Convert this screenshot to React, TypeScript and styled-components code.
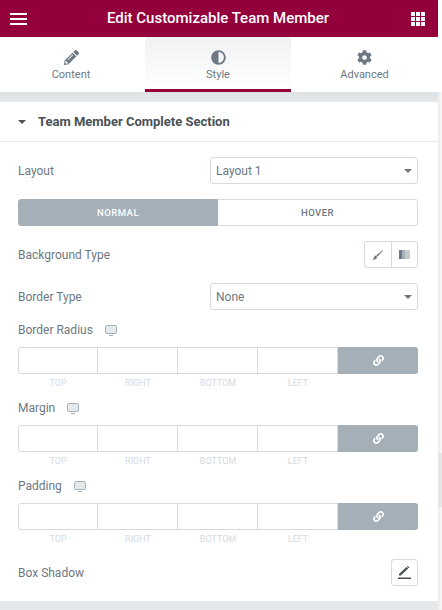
import React from 'react'
import styled, { createGlobalStyle } from 'styled-components'
import { FaPencilAlt, FaAdjust, FaCog, FaLink } from 'react-icons/fa'

const GlobalStyle = createGlobalStyle`
  html, body {
    margin: 0;
    padding: 0;
    background: #fff;
    font-family: Roboto, "Liberation Sans", sans-serif;
  }
`

const Page = styled.div`
  display: flex;
  width: 442px;
  height: 610px;
  overflow: hidden;
`
const Panel = styled.div`
  width: 438px;
  height: 610px;
  overflow: hidden;
  background: #e6e9ec;
`
const Rail = styled.div`
  position: relative;
  flex: 1;
  margin-top: 92px;
  background: linear-gradient(90deg, #ebebeb, #f8f8f8);
`
const RailThumb = styled.div`
  position: absolute;
  top: 361px;
  left: 0;
  right: 0;
  height: 54px;
  background: #e4e7ea;
`
const Header = styled.div`
  height: 37px;
  background: #93003c;
  color: #fff;
  display: flex;
  align-items: center;
  justify-content: space-between;
  padding: 0 13px 0 10px;
`
const HeaderTitle = styled.div`
  font-size: 15px;
  font-weight: 500;
  line-height: 37px;
  margin-left: -2px;
`
const Tabs = styled.div`
  display: flex;
  height: 55px;
  background: #fff;
`
const Tab = styled.div<{ $active?: boolean; $first?: boolean }>`
  width: ${({ $active }) => ($active ? '146px' : '145px')};
  flex: ${({ $active, $first }) => ($active || $first ? 'none' : '1')};
  box-sizing: border-box;
  display: flex;
  flex-direction: column;
  align-items: center;
  padding-top: 12px;
  padding-right: ${({ $first }) => ($first ? '3px' : '0')};
  gap: 3px;
  color: #6d7882;
  font-size: 11px;
  line-height: 13px;
  background: ${({ $active }) => ($active ? 'linear-gradient(#eff1f3, #fff)' : '#fff')};
  border-bottom: 3px solid ${({ $active }) => ($active ? '#93003c' : 'transparent')};
`
const TabIcon = styled.div`
  height: 16px;
  display: flex;
  align-items: center;
  justify-content: center;
  font-size: 15px;
  color: #6d7882;
`
const Gap = styled.div`
  height: 10px;
  background: linear-gradient(#dfe2e5, #e6e9ec);
`
const Section = styled.div`
  background: #fff;
  height: 499px;
`
const SectionHead = styled.div`
  height: 39px;
  display: flex;
  align-items: center;
  gap: 12px;
  padding-left: 18px;
  border-bottom: 1px solid #e6e9ec;
  color: #495157;
  font-size: 13px;
  font-weight: 700;
`
const Caret = styled.span`
  width: 0;
  height: 0;
  border-left: 4px solid transparent;
  border-right: 4px solid transparent;
  border-top: 4px solid #495157;
`
const Body = styled.div`
  padding: 15px 20px 0 18px;
`
const Row = styled.div<{ $mt?: number }>`
  display: flex;
  align-items: center;
  justify-content: space-between;
  height: 27px;
  margin-top: ${({ $mt }) => $mt ?? 15}px;
`
const Label = styled.div`
  display: flex;
  align-items: center;
  gap: 12px;
  font-size: 12px;
  line-height: 14px;
  color: #6d7882;
`
const Select = styled.div`
  box-sizing: border-box;
  width: 208px;
  height: 27px;
  border: 1px solid #d5dadf;
  border-radius: 3px;
  display: flex;
  align-items: center;
  justify-content: space-between;
  padding: 0 5px;
  font-size: 12px;
  color: #6d7882;
`
const SelectCaret = styled.span`
  width: 0;
  height: 0;
  border-left: 4px solid transparent;
  border-right: 4px solid transparent;
  border-top: 4px solid #6d7882;
`
const Toggle = styled.div`
  display: flex;
  height: 27px;
  margin-top: 15px;
`
const ToggleItem = styled.div<{ $active?: boolean }>`
  flex: 0 0 50%;
  box-sizing: border-box;
  display: flex;
  align-items: center;
  justify-content: center;
  font-size: 9.5px;
  font-weight: 500;
  letter-spacing: 0.5px;
  color: ${({ $active }) => ($active ? '#fff' : '#6d7882')};
  background: ${({ $active }) => ($active ? '#a4afb7' : '#fff')};
  border: 1px solid ${({ $active }) => ($active ? '#a4afb7' : '#d5dadf')};
  border-radius: ${({ $active }) => ($active ? '3px 0 0 3px' : '0 3px 3px 0')};
  ${({ $active }) => ($active ? '' : 'border-left: 0;')}
`
const ChoiceGroup = styled.div`
  display: flex;
  width: 54px;
  height: 27px;
  box-sizing: border-box;
  border: 1px solid #d5dadf;
  border-radius: 3px;
`
const Choice = styled.div`
  flex: 1;
  display: flex;
  align-items: center;
  justify-content: center;
  & + & {
    border-left: 1px solid #d5dadf;
  }
`
const GradientSwatch = styled.span`
  width: 11px;
  height: 9px;
  background: linear-gradient(90deg, #6d7882 0 25%, #a4afb7 25% 55%, #c6cdc9 55% 100%);
`
const DimLabelRow = styled.div<{ $mt: number }>`
  height: 14px;
  margin-top: ${({ $mt }) => $mt}px;
  margin-bottom: 10px;
`
const DimInputs = styled.div`
  display: flex;
  height: 27px;
`
const DimInput = styled.div`
  box-sizing: border-box;
  width: 80px;
  border: 1px solid #d5dadf;
  border-left: 0;
  &:first-child {
    border-left: 1px solid #d5dadf;
    border-radius: 3px 0 0 3px;
  }
`
const LinkButton = styled.div`
  width: 80px;
  background: #a4afb7;
  border-radius: 0 3px 3px 0;
  display: flex;
  align-items: center;
  justify-content: center;
  color: #fff;
  font-size: 11px;
`
const DimCaptions = styled.div`
  display: flex;
  margin-top: 3px;
  height: 12px;
`
const DimCaption = styled.div`
  width: 80px;
  text-align: center;
  font-size: 9px;
  line-height: 12px;
  color: #d5dadf;
`
const EditButton = styled.div`
  box-sizing: border-box;
  width: 27px;
  height: 27px;
  border: 1px solid #d5dadf;
  border-radius: 3px;
  display: flex;
  align-items: center;
  justify-content: center;
`

const MenuIcon = () => (
  <svg width="17" height="12" viewBox="0 0 17 12" fill="#fff">
    <rect y="0" width="17" height="2" />
    <rect y="5" width="17" height="2" />
    <rect y="10" width="17" height="2" />
  </svg>
)

const GridIcon = () => (
  <svg width="14" height="14" viewBox="0 0 14 14" fill="#fff">
    {[0, 5, 10].map((y) =>
      [0, 5, 10].map((x) => <rect key={`${x}-${y}`} x={x} y={y} width="4" height="4" />)
    )}
  </svg>
)

const DesktopIcon = () => (
  <svg width="12" height="11" viewBox="0 0 12 11" fill="none">
    <rect x="0.5" y="0.5" width="11" height="8" rx="1" stroke="#a4afb7" fill="#e6e9ec" />
    <rect x="4" y="10" width="4" height="1" fill="#a4afb7" />
  </svg>
)

const BrushIcon = () => (
  <svg width="11" height="10" viewBox="0 0 11 10" fill="#6d7882">
    <path d="M10.6 0.2 L11 0.7 L5.6 6.4 L4.2 5.2 Z" />
    <path d="M3.8 5.6 L5.2 6.9 C5 8.6 3 9.9 0 9.6 C1.4 9 1.6 8.4 1.9 7.4 C2.2 6.4 2.9 5.9 3.8 5.6 Z" />
  </svg>
)

const EditIcon = () => (
  <svg width="14" height="13" viewBox="0 0 14 13" fill="#495157">
    <path d="M1 9.6 L1 8 L8.4 0.9 L10.2 2.6 L2.8 9.6 Z" />
    <path d="M9.2 0.2 C9.5 -0.1 9.9 -0.1 10.2 0.2 L11 1 C11.3 1.3 11.3 1.7 11 2 L10.7 2.2 L8.9 0.5 Z" />
    <rect x="0" y="11.5" width="13" height="1.5" />
  </svg>
)

const sides = ['TOP', 'RIGHT', 'BOTTOM', 'LEFT']

const Dimensions: React.FC<{ title: string; mt: number }> = ({ title, mt }) => (
  <div>
    <DimLabelRow $mt={mt}>
      <Label>
        {title}
        <DesktopIcon />
      </Label>
    </DimLabelRow>
    <DimInputs>
      {sides.map((s) => (
        <DimInput key={s} />
      ))}
      <LinkButton>
        <FaLink />
      </LinkButton>
    </DimInputs>
    <DimCaptions>
      {sides.map((s) => (
        <DimCaption key={s}>{s}</DimCaption>
      ))}
    </DimCaptions>
  </div>
)

export default function App() {
  return (
    <Page>
      <GlobalStyle />
      <Panel>
        <Header>
          <MenuIcon />
          <HeaderTitle>Edit Customizable Team Member</HeaderTitle>
          <GridIcon />
        </Header>
        <Tabs>
          <Tab $first>
            <TabIcon>
              <FaPencilAlt />
            </TabIcon>
            Content
          </Tab>
          <Tab $active>
            <TabIcon>
              <FaAdjust />
            </TabIcon>
            Style
          </Tab>
          <Tab>
            <TabIcon>
              <FaCog />
            </TabIcon>
            Advanced
          </Tab>
        </Tabs>
        <Gap />
        <Section>
          <SectionHead>
            <Caret />
            Team Member Complete Section
          </SectionHead>
          <Body>
            <Row $mt={0}>
              <Label>Layout</Label>
              <Select>
                Layout 1
                <SelectCaret />
              </Select>
            </Row>
            <Toggle>
              <ToggleItem $active>NORMAL</ToggleItem>
              <ToggleItem>HOVER</ToggleItem>
            </Toggle>
            <Row>
              <Label>Background Type</Label>
              <ChoiceGroup>
                <Choice>
                  <BrushIcon />
                </Choice>
                <Choice>
                  <GradientSwatch />
                </Choice>
              </ChoiceGroup>
            </Row>
            <Row>
              <Label>Border Type</Label>
              <Select>
                None
                <SelectCaret />
              </Select>
            </Row>
            <Dimensions title="Border Radius" mt={13} />
            <Dimensions title="Margin" mt={12} />
            <Dimensions title="Padding" mt={12} />
            <Row $mt={14}>
              <Label>Box Shadow</Label>
              <EditButton>
                <EditIcon />
              </EditButton>
            </Row>
          </Body>
        </Section>
      </Panel>
      <Rail>
        <RailThumb />
      </Rail>
    </Page>
  )
}
